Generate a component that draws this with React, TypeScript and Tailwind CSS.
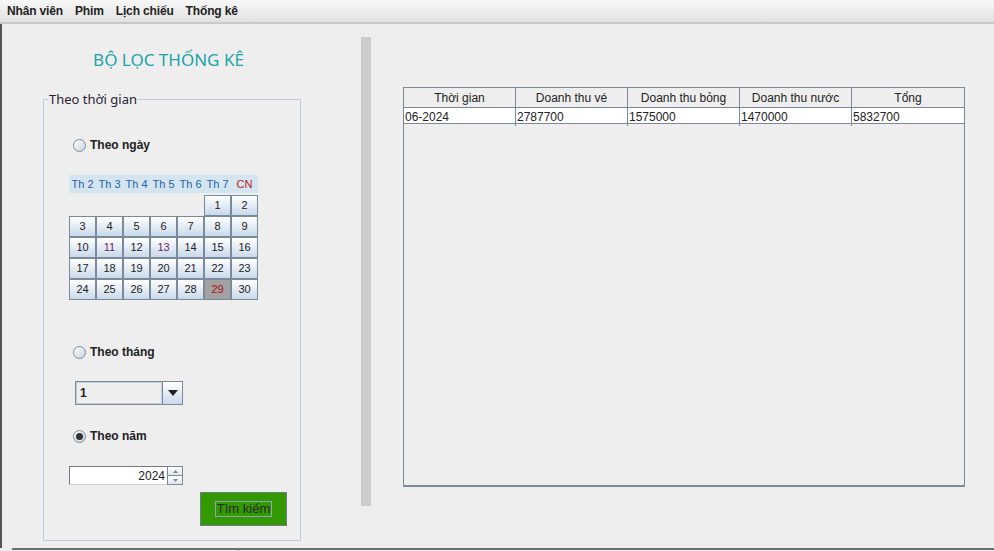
import React from "react";

const SANS = { fontFamily: '"Liberation Sans", Arial, sans-serif' };
const UI = { fontFamily: '"Noto Sans", "Open Sans", sans-serif' };

const days: (number | null)[][] = [
  [null, null, null, null, null, 1, 2],
  [3, 4, 5, 6, 7, 8, 9],
  [10, 11, 12, 13, 14, 15, 16],
  [17, 18, 19, 20, 21, 22, 23],
  [24, 25, 26, 27, 28, 29, 30],
];

const heads = ["Th 2", "Th 3", "Th 4", "Th 5", "Th 6", "Th 7", "CN"];

function Radio({ checked, label }: { checked?: boolean; label: string }) {
  return (
    <div className="flex items-center h-[16px]">
      <span className="w-[13px] h-[13px] rounded-full border border-[#7d8b99] bg-gradient-to-br from-white to-[#c5d2df] flex items-center justify-center">
        {checked && <span className="w-[7px] h-[7px] rounded-full bg-[#333]" />}
      </span>
      <span className="ml-[4px] text-[12px] font-bold text-[#222]" style={SANS}>
        {label}
      </span>
    </div>
  );
}

function Calendar() {
  return (
    <div className="w-[189px]" style={SANS}>
      <div className="grid grid-cols-7 h-[18px] bg-[#d5e5ef] items-center">
        {heads.map((h) => (
          <span
            key={h}
            className={`text-center text-[11px] ${h === "CN" ? "text-[#b01c1c]" : "text-[#1e62a8]"}`}
          >
            {h}
          </span>
        ))}
      </div>
      <div className="mt-[2px] grid grid-cols-7">
        {days.flat().map((d, i) =>
          d === null ? (
            <span key={i} className="h-[21px]" />
          ) : (
            <span
              key={i}
              className={`h-[21px] flex items-center justify-center border border-[#7b8a99] text-[11px] ${
                d === 29
                  ? "bg-[#a2a2a2] text-[#b01010]"
                  : `bg-gradient-to-b from-white to-[#c9d9ea] ${d === 11 || d === 13 ? "text-[#6e1f66]" : "text-[#222]"}`
              }`}
            >
              {d}
            </span>
          )
        )}
      </div>
    </div>
  );
}

function Combo() {
  return (
    <div className="flex w-[108px] h-[24px] border border-[#7b8a99]" style={SANS}>
      <div className="flex-1 border border-[#c3cfdb] bg-[#eeeeee] flex items-center pl-[3px] text-[12px] font-bold text-[#222]">
        1
      </div>
      <div className="w-[20px] border-l border-[#7b8a99] bg-gradient-to-b from-white to-[#c9d9ea] flex items-center justify-center">
        <svg width="10" height="6" viewBox="0 0 10 6">
          <path d="M0 0 H10 L5 6 Z" fill="#222" />
        </svg>
      </div>
    </div>
  );
}

function Spinner() {
  return (
    <div className="flex w-[114px] h-[19px]" style={SANS}>
      <div className="flex-1 bg-white border-t border-l border-[#6f7c88] border-b border-b-[#d0d0d0] flex items-center justify-end pr-[2px] text-[12px] text-[#222]">
        2024
      </div>
      <div className="w-[16px] flex flex-col border border-[#7b8a99]">
        <div className="flex-1 flex items-center justify-center bg-gradient-to-b from-white to-[#dde6ef] border-b border-[#7b8a99]">
          <svg width="5" height="3" viewBox="0 0 5 3">
            <path d="M0 3 L2.5 0 L5 3 Z" fill="#888" />
          </svg>
        </div>
        <div className="flex-1 flex items-center justify-center bg-gradient-to-b from-white to-[#dde6ef]">
          <svg width="5" height="3" viewBox="0 0 5 3">
            <path d="M0 0 H5 L2.5 3 Z" fill="#888" />
          </svg>
        </div>
      </div>
    </div>
  );
}

const cols = ["Thời gian", "Doanh thu vé", "Doanh thu bỏng", "Doanh thu nước", "Tổng"];
const row = ["06-2024", "2787700", "1575000", "1470000", "5832700"];

function Table() {
  return (
    <div className="w-[562px] h-[400px] border border-[#7b8a99] border-b-2 bg-[#eeeeee]" style={SANS}>
      <div className="grid grid-cols-5 h-[20px] border-b border-[#7b8a99] bg-[#eeeeee]">
        {cols.map((c, i) => (
          <div
            key={c}
            className={`flex items-center justify-center text-[12px] text-[#222] ${i < 4 ? "border-r border-[#7b8a99]" : ""}`}
          >
            {c}
          </div>
        ))}
      </div>
      <div className="grid grid-cols-5 h-[16px] border-b border-[#7b8a99] bg-white">
        {row.map((c, i) => (
          <div
            key={i}
            className={`flex items-center pl-[1px] text-[12px] text-[#222] ${i < 4 ? "border-r border-[#7b8a99]" : ""}`}
          >
            {c}
          </div>
        ))}
      </div>
    </div>
  );
}

export default function App() {
  return (
    <div className="w-[994px] h-[551px] bg-[#eeeeee] flex flex-col overflow-hidden">
      {/* menu bar */}
      <div className="h-[24px] shrink-0 flex items-center gap-[12px] pl-[7px] bg-gradient-to-b from-[#f7f7f7] to-[#e2e2e2] border-b-2 border-[#c9c9c9]" style={SANS}>
        {["Nhân viên", "Phim", "Lịch chiếu", "Thống kê"].map((m) => (
          <span key={m} className="text-[12px] font-bold text-[#222] tracking-[-0.15px]">
            {m}
          </span>
        ))}
      </div>

      {/* window body */}
      <div className="flex-1 flex border-l-2 border-[#555]">
        <div className="flex flex-col w-[258px] ml-[41px]">
          <div className="mt-[23px] h-[26px] text-center text-[17px] leading-[26px] text-[#1ca4a8] pr-[7px]" style={UI}>
            BỘ LỌC THỐNG KÊ
          </div>
          <fieldset className="mt-[17px] h-[451px] border border-[#b7cde3]">
            <legend className="ml-[4px] px-[1px] text-[13px] leading-[18px] text-[#2a2233]" style={UI}>
              Theo thời gian
            </legend>
            <div className="pl-[29px]">
              <div className="mt-[29px]">
                <Radio label="Theo ngày" />
              </div>
              <div className="mt-[22px] -ml-[4px]">
                <Calendar />
              </div>
              <div className="mt-[44px]">
                <Radio label="Theo tháng" />
              </div>
              <div className="mt-[21px] ml-[2px]">
                <Combo />
              </div>
              <div className="mt-[23px]">
                <Radio checked label="Theo năm" />
              </div>
              <div className="mt-[22px] -ml-[4px]">
                <Spinner />
              </div>
              <div className="mt-[7px] ml-[127px]">
                <button className="w-[87px] h-[34px] bg-[#339900] border border-[#6b7b8c] flex items-center justify-center" style={SANS}>
                  <span className="border border-[#8fa3bd] px-[1px] h-[16px] leading-[14px] text-[13px] text-[#2b2b2b]">
                    Tìm kiếm
                  </span>
                </button>
              </div>
            </div>
          </fieldset>
          <div className="flex-1" />
        </div>

        <div className="ml-[60px] mt-[13px] w-[10px] h-[469px] bg-[#cccccc]" />

        <div className="ml-[32px] mt-[63px]">
          <Table />
        </div>
      </div>
      <div className="h-[3px] shrink-0 ml-[12px] border-t-2 border-[#6e6e6e] bg-[#eeeeee] flex">
        <div className="ml-[226px] w-[1px] h-full bg-[#9a9a9a]" />
      </div>
    </div>
  );
}
